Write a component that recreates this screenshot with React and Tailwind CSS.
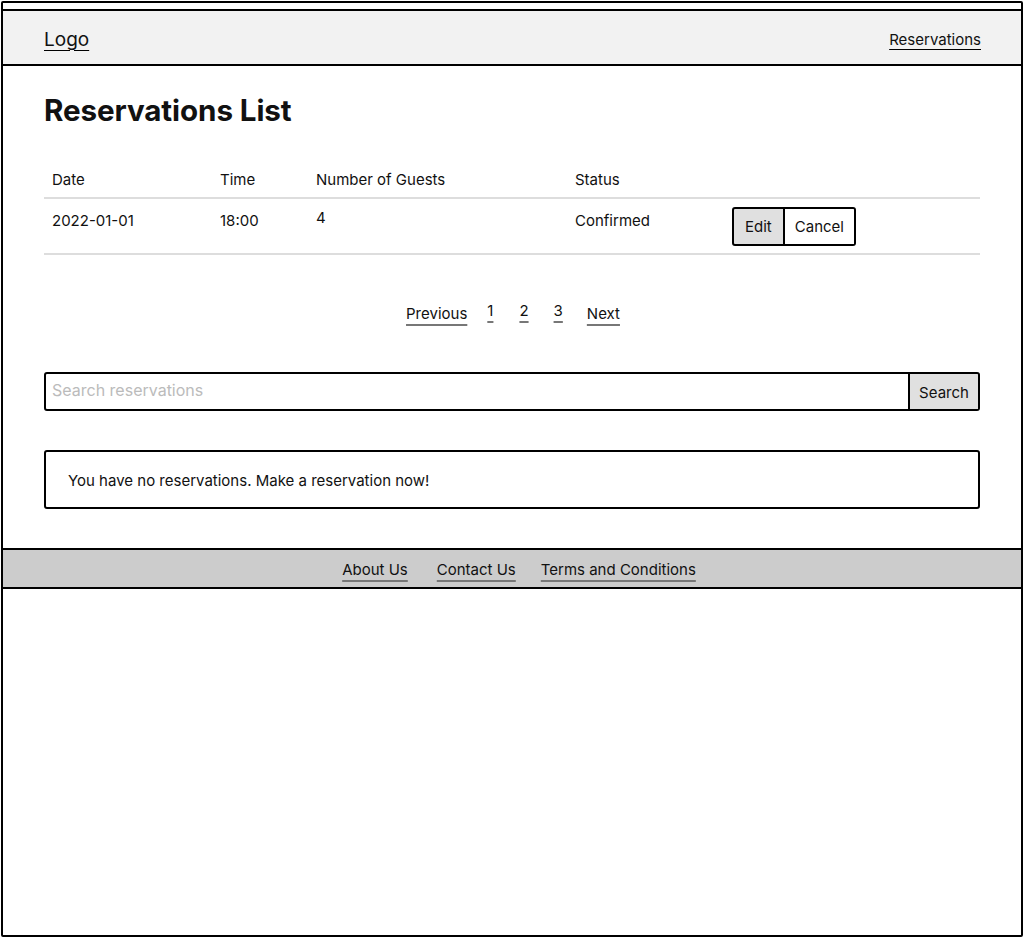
export default function App() {
  const font = { fontFamily: 'Inter, "Noto Sans", sans-serif' };
  return (
    <div style={font} className="bg-white w-[1024px] h-[938px] text-[#111]">
      <div className="ml-px mt-px w-[1022px] h-[936px] border-2 border-black bg-white flex flex-col rounded-[2px]">
        {/* Header */}
        <header className="mt-[6px] -mx-[2px] h-[57px] border-2 border-black bg-[#f2f2f2] flex items-center justify-between pl-[41px] pr-[40px] pt-[3px] rounded-[2px]">
          <a className="text-[19px] leading-none underline underline-offset-[4px] decoration-1 decoration-black">Logo</a>
          <a className="text-[15px] leading-none underline underline-offset-[4px] decoration-1 decoration-black">Reservations</a>
        </header>

        <main className="px-[41px] flex flex-col">
          <h1 className="mt-[25px] text-[29.6px] leading-[38px] font-bold tracking-[-0.1px]">Reservations List</h1>

          <table className="mt-[31px] w-full text-[15px] border-collapse">
            <thead>
              <tr className="border-b-2 border-[#ddd]">
                <th className="w-[168px] h-[38px] px-2 pt-[3px] text-left font-normal">Date</th>
                <th className="w-[96px] px-2 pt-[3px] text-left font-normal">Time</th>
                <th className="w-[259px] px-2 pt-[3px] text-left font-normal">Number of Guests</th>
                <th className="w-[157px] px-2 pt-[3px] text-left font-normal">Status</th>
                <th className="px-2 text-left font-normal"></th>
              </tr>
            </thead>
            <tbody>
              <tr className="border-b-2 border-[#ddd] align-top">
                <td className="px-2 pt-[11px] h-[56px] leading-[22px]">2022-01-01</td>
                <td className="px-2 pt-[11px] leading-[22px]">18:00</td>
                <td className="px-2 pt-[8px] leading-[22px]">4</td>
                <td className="px-2 pt-[11px] leading-[22px]">Confirmed</td>
                <td className="pl-[8px] pt-[8px]">
                  <div className="flex">
                    <button className="h-[39px] px-[11px] pt-px bg-[#e0e0e0] border-2 border-black rounded-l-[3px]">Edit</button>
                    <button className="h-[39px] px-[10px] pt-px bg-white border-2 border-l-0 border-black rounded-r-[3px]">Cancel</button>
                  </div>
                </td>
              </tr>
            </tbody>
          </table>

          <nav className="mt-[48px] flex justify-center items-start text-[15px] leading-[22px] pl-[2px]">
            <a className="underline underline-offset-[5px] decoration-2 decoration-[#777]">Previous</a>
            <a className="ml-[20px] -mt-[3px] underline underline-offset-[5px] decoration-2 decoration-[#777]">1</a>
            <a className="ml-[26px] -mt-[3px] underline underline-offset-[5px] decoration-2 decoration-[#777]">2</a>
            <a className="ml-[25px] -mt-[3px] underline underline-offset-[5px] decoration-2 decoration-[#777]">3</a>
            <a className="ml-[24px] underline underline-offset-[5px] decoration-2 decoration-[#777]">Next</a>
          </nav>

          <div className="mt-[47px] flex h-[39px]">
            <input
              className="flex-1 h-full border-2 border-black rounded-l-[3px] px-[6px] pb-[3px] text-[16px] outline-none placeholder:text-[#bbb]"
              placeholder="Search reservations"
            />
            <button className="w-[70px] h-full bg-[#e0e0e0] border-2 border-l-0 border-black rounded-r-[3px] text-[15px] pt-[3px]">Search</button>
          </div>

          <div className="mt-[39px] h-[59px] border-2 border-black rounded-[3px] flex items-center px-[22px] pt-[3px] text-[15px]">
            You have no reservations. Make a reservation now!
          </div>
        </main>

        <footer className="mt-[39px] -mx-[2px] h-[41px] border-2 border-black bg-[#ccc] flex items-center justify-center pl-[14px] pt-[3px] text-[15px] rounded-[2px]">
          <a className="underline underline-offset-[5px] decoration-2 decoration-[#777]">About Us</a>
          <a className="ml-[29px] underline underline-offset-[5px] decoration-2 decoration-[#777]">Contact Us</a>
          <a className="ml-[25px] underline underline-offset-[5px] decoration-2 decoration-[#777]">Terms and Conditions</a>
        </footer>
      </div>
    </div>
  );
}
